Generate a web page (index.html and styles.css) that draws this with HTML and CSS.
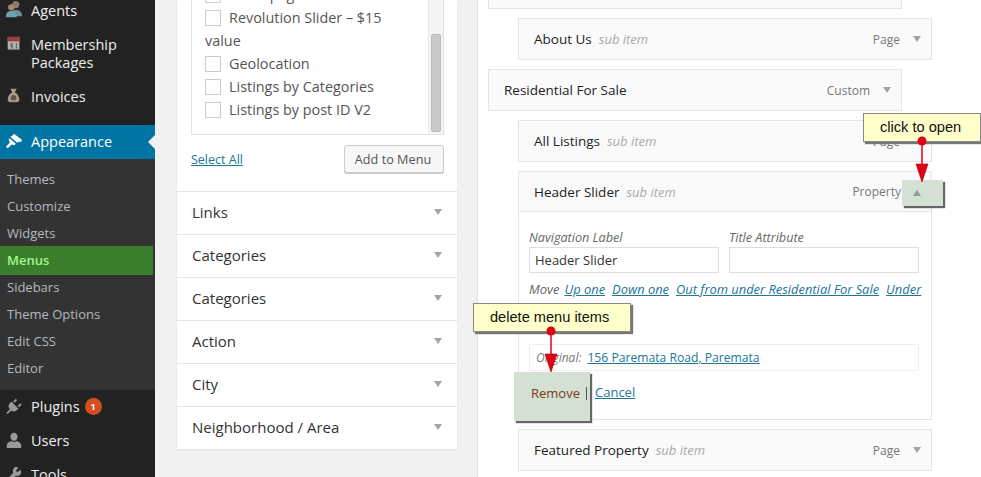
FILE: index.html
```html
<!DOCTYPE html>
<html lang="en">
<head>
    <meta charset="UTF-8">
    <meta name="viewport" content="width=device-width, initial-scale=1.0">
    <title>Menus</title>
    <link rel="stylesheet" href="styles.css">
</head>
<body>
    <div class="wrap">
        <div class="sidebar">
            <ul class="main-menu">
                <li class="agents"><svg class="m-icon" viewBox="0 0 20 20"><circle cx="12" cy="4" r="4" fill="#8a7a62"/><path d="M6 17c0-5 2-7 6-7s7 2 7 7z" fill="#6d8f99"/><circle cx="7" cy="7" r="3.5" fill="#a08c70"/><path d="M1 18c0-5 2-7 6-7s6 2 6 7z" fill="#6fa3ad"/></svg><span>Agents</span></li>
                <li class="tall"><svg class="m-icon" viewBox="0 0 20 20"><rect x="3" y="1" width="13" height="14" fill="#b5b5b5"/><rect x="3" y="1" width="13" height="5" fill="#a33a3a"/><path d="M6 8h3v1.500H7.500v1H9V14H6v-1h1.500v-1H6zM12 8h1.500v6H12z" fill="#666"/></svg><span>Membership<br>Packages</span></li>
                <li class="invoices"><svg class="m-icon" viewBox="0 0 20 20"><path d="M6 2h7l-2 4c3 1 5 5 5 8 0 2-1 3-3 3H6c-2 0-3-1-3-3 0-3 2-7 5-8z" fill="#a89a85"/><circle cx="9.500" cy="12" r="3" fill="#5f554a"/></svg><span>Invoices</span></li>
                <li class="current"><svg class="m-icon" viewBox="0 0 20 20"><path d="M10 2l9 7-1.500 2c-2-.5-3 0-4 1L6 5.500c1.500-1 3-2 4-3.500zM5 7l7 6-2 2-2-1.500-5 4.500-2-1.500 4.500-5L4 9z" fill="#fff"/></svg><span>Appearance</span></li>
            </ul>
            <ul class="sub-menu">
                <li>Themes</li>
                <li>Customize</li>
                <li>Widgets</li>
                <li class="active">Menus</li>
                <li>Sidebars</li>
                <li>Theme Options</li>
                <li>Edit CSS</li>
                <li>Editor</li>
            </ul>
            <ul class="main-menu lower">
                <li><svg class="m-icon" viewBox="0 0 20 20"><path d="M9 5l3-3 1.500 1.500-3 3zM14 10l3-3 1.500 1.500-3 3z" fill="#999"/><path d="M7 5l8 8-2.500 2c-1.500 1.500-4 1.500-5.500 0l-2-2c-1.500-1.500-1.500-4 0-5.500z" fill="#999"/><path d="M6 13l1.500 1.500-4.500 4.500L1.500 17.500z" fill="#999"/></svg><span>Plugins</span><b class="count">1</b></li>
                <li><svg class="m-icon" viewBox="0 0 20 20"><path d="M10 2c2.500 0 4 2 4 4.500S12.500 11 10 11 6 9 6 6.500 7.500 2 10 2zM2 19v-3c0-3 3-4 5-5 2 1.500 4 1.500 6 0 2 1 5 2 5 5v3z" fill="#999"/></svg><span>Users</span></li>
                <li><svg class="m-icon" viewBox="0 0 20 20"><path d="M12 2l3 1-3 3 2 2 3-3 1 3c0 3-3 5-6 4l-6 6-3-3 6-6c-1-3 1-7 3-7z" fill="#999"/></svg><span>Tools</span></li>
            </ul>
        </div>

        <div class="left-col">
            <div class="accordion">
                <div class="checklist-box">
                    <div class="checklist">
                        <div class="check-row cut"><i class="box"></i>Homepage</div>
                        <div class="check-row"><i class="box"></i>Revolution Slider – $15</div>
                        <div class="check-wrap">value</div>
                        <div class="check-row"><i class="box"></i>Geolocation</div>
                        <div class="check-row"><i class="box"></i>Listings by Categories</div>
                        <div class="check-row"><i class="box"></i>Listings by post ID V2</div>
                    </div>
                    <div class="scroll-track"><div class="scroll-thumb"></div></div>
                </div>
                <div class="add-row">
                    <a class="link" href="#">Select All</a>
                    <button class="add-btn">Add to Menu</button>
                </div>
                <div class="section">Links<i class="arrow"></i></div>
                <div class="section">Categories<i class="arrow"></i></div>
                <div class="section">Categories<i class="arrow"></i></div>
                <div class="section">Action<i class="arrow"></i></div>
                <div class="section">City<i class="arrow"></i></div>
                <div class="section">Neighborhood / Area<i class="arrow"></i></div>
            </div>
        </div>

        <div class="right-col">
            <div class="item top-stub"></div>
            <div class="item sub">
                <div class="item-title"><strong>About Us</strong><em>sub item</em></div>
                <div class="item-type">Page<i class="arrow"></i></div>
            </div>
            <div class="item">
                <div class="item-title"><strong>Residential For Sale</strong></div>
                <div class="item-type">Custom<i class="arrow"></i></div>
            </div>
            <div class="item sub">
                <div class="item-title"><strong>All Listings</strong><em>sub item</em></div>
                <div class="item-type">Page<i class="arrow"></i></div>
            </div>
            <div class="item sub open">
                <div class="item-title"><strong>Header Slider</strong><em>sub item</em></div>
                <div class="item-type">Property<span class="toggle-hl"><i class="arrow up"></i></span></div>
            </div>
            <div class="settings">
                <div class="fields">
                    <label>Navigation Label<input type="text" value="Header Slider"></label>
                    <label>Title Attribute<input type="text"></label>
                </div>
                <div class="move"><em>Move</em><a class="link" href="#">Up one</a><a class="link" href="#">Down one</a><a class="link" href="#">Out from under Residential For Sale</a><a class="link" href="#">Under</a></div>
                <div class="original"><em>Original:</em><a class="link" href="#">156 Paremata Road, Paremata</a></div>
                <div class="actions">
                    <span class="remove-hl"><span class="remove">Remove</span><span class="sep"></span></span><a class="link cancel" href="#">Cancel</a>
                </div>
            </div>
            <div class="item sub">
                <div class="item-title"><strong>Featured Property</strong><em>sub item</em></div>
                <div class="item-type">Page<i class="arrow"></i></div>
            </div>
        </div>
    </div>

    <!-- callouts drawn over the screenshot -->
    <div class="note note-open">click to open</div>
    <div class="note note-delete">delete menu items</div>
    <svg class="pointer pointer-open" viewBox="0 0 20 50"><circle cx="10" cy="5" r="4.500" fill="#e00010"/><path d="M10 5v26" stroke="#e00010" stroke-width="1.500"/><path d="M4 28h12l-6 18z" fill="#e00010" stroke="#a00010" stroke-width=".6"/></svg>
    <svg class="pointer pointer-delete" viewBox="0 0 20 50"><circle cx="10" cy="5" r="4.500" fill="#e00010"/><path d="M10 5v26" stroke="#e00010" stroke-width="1.500"/><path d="M4 28h12l-6 18z" fill="#e00010" stroke="#a00010" stroke-width=".6"/></svg>
</body>
</html>
```

FILE: styles.css
```css
* {
    box-sizing: border-box;
}
html, body {
    margin: 0;
    height: 477px;
    overflow: hidden;
}
body {
    font-family: "Open Sans", sans-serif;
    font-size: 13px;
    color: #444;
    background-color: #f1f1f1;
    position: relative;
}
ul {
    list-style: none;
    margin: 0;
    padding: 0;
}
.wrap {
    display: flex;
    align-items: flex-start;
    height: 477px;
}

/* sidebar */
.sidebar {
    width: 155px;
    height: 477px;
    flex-shrink: 0;
    background-color: #222;
    color: #eee;
    font-size: 14.5px;
    overflow: hidden;
}
.main-menu li {
    display: flex;
    align-items: center;
    height: 34px;
    padding: 0 0 2px 5px;
    position: relative;
}
.main-menu .agents {
    height: 22px;
    align-items: flex-start;
    margin-top: 1px;
    margin-bottom: 13px;
}
.main-menu .tall {
    height: 44px;
    line-height: 18px;
    align-items: flex-start;
}
.main-menu .invoices {
    margin-bottom: 11px;
}
.main-menu .current {
    background-color: #0074a2;
    color: #fff;
}
.main-menu .current::after {
    content: "";
    position: absolute;
    right: 0;
    top: 10px;
    border: 7px solid transparent;
    border-right-color: #f1f1f1;
    border-left: 0;
}
.m-icon {
    width: 18px;
    height: 18px;
    margin-right: 8px;
    flex-shrink: 0;
}
.sub-menu {
    background-color: #333;
    padding: 7px 0 8px;
    font-size: 13px;
    color: #b4b9be;
}
.sub-menu li {
    height: 27px;
    line-height: 27px;
    padding-left: 7px;
}
.sub-menu .active {
    height: 29px;
    line-height: 29px;
    margin: -1px 2px -1px 0;
    background-color: #3a7d2c;
    color: #a5f58c;
    font-weight: 600;
}
.count {
    display: inline-block;
    width: 17px;
    height: 17px;
    line-height: 17px;
    border-radius: 50%;
    margin-left: 5px;
    background-color: #d54e21;
    color: #fff;
    font-size: 9px;
    text-align: center;
}

/* left column */
.left-col {
    width: 280px;
    margin-left: 22px;
    flex-shrink: 0;
}
.accordion {
    background-color: #fff;
    height: 449px;
    box-shadow: 0 1px 2px rgba(0, 0, 0, 0.08);
}
.checklist-box {
    margin: 0 13px 0 14px;
    height: 135px;
    border: 1px solid #e2e2e2;
    border-top: 0;
    display: flex;
    justify-content: space-between;
    overflow: hidden;
}
.checklist {
    padding-left: 13px;
    font-size: 14.4px;
    color: #555;
    line-height: 23px;
    margin-top: -17px;
}
.check-row {
    display: flex;
    align-items: center;
    height: 23px;
}
.check-wrap {
    height: 23px;
}
.box {
    width: 16px;
    height: 16px;
    border: 1px solid #ccc;
    background-color: #fff;
    margin-right: 8px;
}
.scroll-track {
    width: 15px;
    background-color: #f4f4f4;
    border-left: 1px solid #e8e8e8;
    padding: 34px 2px 3px 2px;
    height: 100%;
}
.scroll-thumb {
    height: 98px;
    background-color: #c9c9c9;
    border: 1px solid #bbb;
    border-radius: 2px;
}
.add-row {
    margin: 10px 13px 18px 14px;
    display: flex;
    justify-content: space-between;
    align-items: center;
    height: 28px;
}
.link {
    color: #21759b;
    text-decoration: underline;
    font-size: 12.5px;
}
.add-btn {
    width: 100px;
    height: 28px;
    padding: 0 2px 0 0;
    background-color: #f7f7f7;
    border: 1px solid #ccc;
    border-radius: 3px;
    box-shadow: 0 1px 0 #ccc;
    color: #555;
    font-family: inherit;
    font-size: 12.7px;
}
.section {
    height: 43px;
    border-top: 1px solid #e5e5e5;
    padding: 0 15px 2px;
    display: flex;
    justify-content: space-between;
    align-items: center;
    font-size: 15px;
    font-weight: 500;
    color: #333;
}
.arrow {
    display: inline-block;
    border-left: 4px solid transparent;
    border-right: 4px solid transparent;
    border-top: 6px solid #a0a5aa;
}
.arrow.up {
    border-top: 0;
    border-bottom: 6px solid #8f9c92;
}

/* right column */
.right-col {
    flex: 1;
    margin-left: 20px;
    height: 477px;
    background-color: #fff;
    border-left: 1px solid #e5e5e5;
    padding-left: 10px;
    overflow: hidden;
}
.item {
    width: 414px;
    height: 42px;
    margin-bottom: 9px;
    background-color: #fafafa;
    border: 1px solid #e5e5e5;
    display: flex;
    justify-content: space-between;
    align-items: center;
    padding: 0 15px;
}
.item.sub {
    margin-left: 30px;
}
.top-stub {
    height: 10px;
    margin-top: -1px;
    border-top: 0;
}
.item.open {
    height: 41px;
    margin-bottom: 0;
}
.item-title strong {
    font-size: 13.5px;
    font-weight: 500;
    color: #222;
}
.item-title em {
    margin-left: 7px;
    font-size: 13px;
    color: #aaa;
}
.item-type {
    display: flex;
    align-items: center;
    font-size: 12px;
    color: #777;
}
.item-type .arrow {
    margin-left: 13px;
    margin-right: -5px;
}
.toggle-hl {
    position: relative;
    z-index: 2;
    display: flex;
    align-items: center;
    width: 41px;
    height: 26px;
    margin: 3px -27px 0 1px;
    background-color: #d3e0d3;
    box-shadow: 2px 2px 1px #666;
    padding-left: 11px;
}
.toggle-hl .arrow {
    margin: 0;
}
.settings {
    width: 414px;
    margin-left: 30px;
    height: 208px;
    border: 1px solid #e5e5e5;
    border-top: 0;
    padding: 0 10px;
    margin-bottom: 9px;
}
.fields {
    display: flex;
    gap: 10px;
    padding-top: 17px;
}
.fields label {
    width: 190px;
    font-size: 12.6px;
    font-style: italic;
    color: #666;
    display: block;
}
.fields input {
    display: block;
    width: 190px;
    height: 26px;
    margin-top: 1px;
    border: 1px solid #ddd;
    padding: 0 5px;
    font-family: inherit;
    font-size: 13px;
    font-style: normal;
    color: #333;
}
.move {
    margin-top: 7px;
    white-space: nowrap;
    font-size: 12.9px;
    font-style: italic;
}
.move em {
    color: #666;
    margin-right: 5px;
}
.move .link {
    margin-right: 7px;
    font-size: 12.9px;
}
.original {
    margin-top: 46px;
    margin-right: 2px;
    height: 27px;
    line-height: 25px;
    border: 1px solid #eee;
    padding-left: 6px;
    font-size: 12px;
}
.original em {
    color: #777;
    margin-right: 6px;
}
.original .link {
    font-size: 12.15px;
}
.actions {
    display: flex;
    align-items: flex-start;
    margin-top: 1px;
    font-size: 13px;
}
.remove-hl {
    position: relative;
    z-index: 2;
    display: flex;
    align-items: center;
    width: 76px;
    height: 49px;
    margin-left: -15px;
    padding: 0 0 7px 17px;
    background-color: #d3e0d3;
    box-shadow: 2px 2px 1px #666;
}
.remove {
    color: #7a3a1a;
}
.sep {
    width: 1px;
    height: 13px;
    background-color: #555;
    margin-left: 6px;
}
.cancel {
    margin: 11px 0 0 5px;
    font-size: 13px;
}

/* callouts */
.note {
    position: absolute;
    background-color: #ffffcc;
    border: 1px solid #888;
    box-shadow: 2px 2px 1px #777;
    font-family: "Liberation Sans", sans-serif;
    font-size: 14.6px;
    color: #111;
    z-index: 5;
}
.note-open {
    left: 863px;
    top: 113px;
    width: 118px;
    height: 29px;
    line-height: 27px;
    padding-left: 16px;
}
.note-delete {
    left: 473px;
    top: 303px;
    width: 158px;
    height: 29px;
    line-height: 27px;
    padding-left: 16px;
}
.pointer {
    position: absolute;
    width: 20px;
    height: 50px;
    z-index: 6;
}
.pointer-open {
    left: 912px;
    top: 136px;
}
.pointer-delete {
    left: 541px;
    top: 326px;
}
```
